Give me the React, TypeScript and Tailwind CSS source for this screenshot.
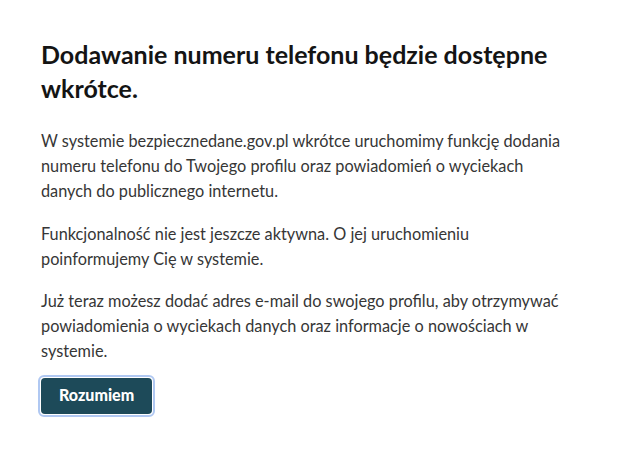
export default function App() {
  return (
    <div className="min-h-screen bg-white px-[41px] pt-[37px] font-['Lato','Liberation_Sans',sans-serif]">
      <h1 className="w-[526px] text-[25px] font-bold leading-[34px] text-[#141414]">
        Dodawanie numeru telefonu będzie dostępne wkrótce.
      </h1>
      <div className="mt-[23px] flex w-[526px] flex-col gap-[17.5px] text-[16.3px] leading-[25px] text-[#363636]">
        <p>
          W systemie bezpiecznedane.gov.pl wkrótce uruchomimy funkcję dodania numeru telefonu do Twojego profilu
          oraz powiadomień o wyciekach danych do publicznego internetu.
        </p>
        <p>Funkcjonalność nie jest jeszcze aktywna. O jej uruchomieniu poinformujemy Cię w systemie.</p>
        <p>
          Już teraz możesz dodać adres e-mail do swojego profilu, aby otrzymywać powiadomienia o wyciekach danych
          oraz informacje o nowościach w systemie.
        </p>
      </div>
      <button className="mt-[12px] ml-[-3px] rounded-[6px] border-2 border-[#b0c8f2] bg-white p-[1px]">
        <span className="block rounded-[4px] bg-[#1d4a59] px-[18px] pt-[5px] pb-[7px] text-[16px] leading-[24px] font-black text-white">
          Rozumiem
        </span>
      </button>
    </div>
  );
}
